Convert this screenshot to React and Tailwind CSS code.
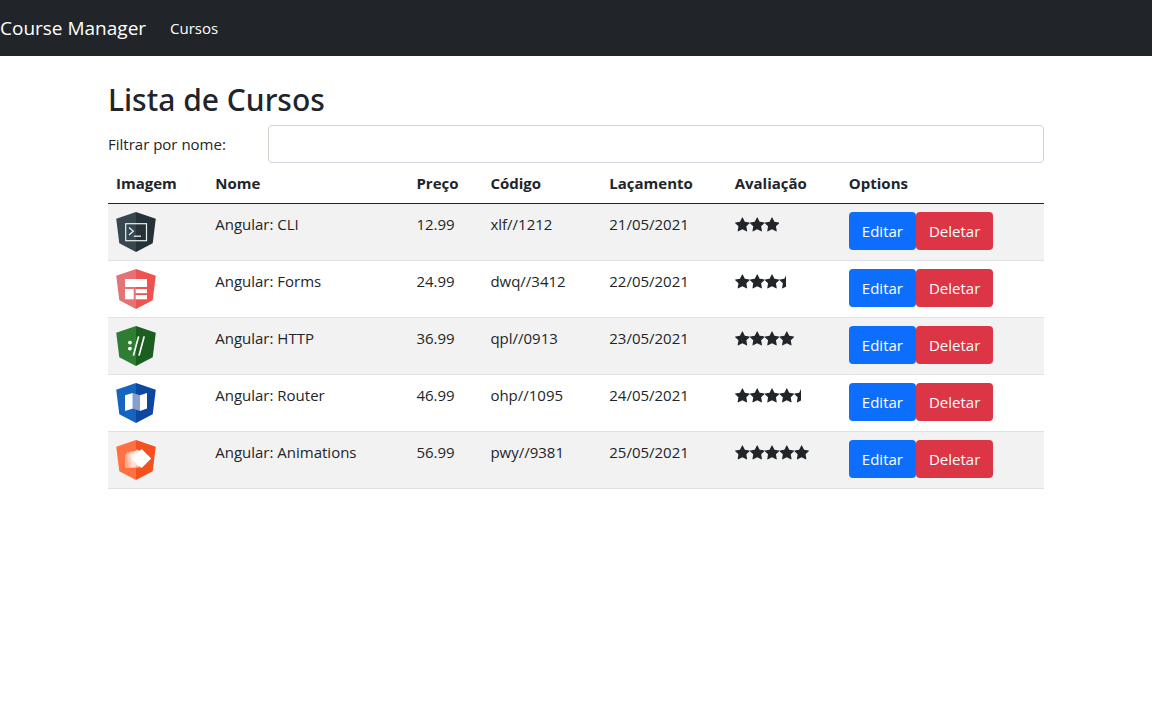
import { useState } from "react";

function Shield({ left, right, label, children }) {
  return (
    <svg viewBox="0 0 40 40" className="block size-10" role="img" aria-label={label}>
      <path d="M20 0 0.2 6.8 3.3 31.2 20 40Z" fill={left} />
      <path d="M20 0 39.8 6.8 36.7 31.2 20 40Z" fill={right} />
      {children}
    </svg>
  );
}

const logos = {
  cli: (
    <Shield left="#37474f" right="#263238" label="Angular CLI">
      <rect x="9.7" y="11.7" width="20.8" height="17" fill="none" stroke="#eceff1" strokeWidth="1.2" />
      <path d="M13 15.5 17.3 19.2 13 22.9" fill="none" stroke="#eceff1" strokeWidth="1.3" />
      <path d="M17.8 24.2H25" stroke="#eceff1" strokeWidth="1.3" />
    </Shield>
  ),
  forms: (
    <Shield left="#e57373" right="#ef5350" label="Angular Forms">
      <rect x="9" y="10" width="22" height="8" fill="#fff" />
      <rect x="9" y="20" width="8.7" height="10.3" fill="#fff" />
      <rect x="19.7" y="20" width="11.3" height="4.2" fill="#fff" />
      <rect x="19.7" y="26" width="11.3" height="4.3" fill="#fff" />
    </Shield>
  ),
  http: (
    <Shield left="#2e7d32" right="#1b5e20" label="Angular HTTP">
      <circle cx="13.9" cy="16.6" r="1.9" fill="#fff" />
      <circle cx="13.9" cy="22.6" r="1.9" fill="#fff" />
      <path d="M22.6 10.4 17.4 29.6M28.2 10.4 23 29.6" stroke="#fff" strokeWidth="1.7" />
    </Shield>
  ),
  router: (
    <Shield left="#1565c0" right="#0d47a1" label="Angular Router">
      <path d="M9 12.3 16.8 10V25.5L9 28Z" fill="#fff" />
      <path d="M16.8 10 24 12.3V28L16.8 25.5Z" fill="#869fcf" />
      <path d="M24 12.3 31 10V25.5L24 28Z" fill="#fff" />
    </Shield>
  ),
  animations: (
    <Shield left="#ff7043" right="#f4511e" label="Angular Animations">
      <rect x="9" y="14" width="14" height="14" fill="#fff" opacity="0.4" />
      <path d="M10.5 12.3 25.5 11.2 27 25.5 13 27.5Z" fill="#fff" opacity="0.35" />
      <path d="M13.5 11.4 26.5 9.8 29.5 24 15.5 27.8Z" fill="#fff" opacity="0.5" />
      <path d="M14.5 17.5 21 9.2 31 18 24 27.8Z" fill="#fff" opacity="0.7" />
      <path d="M25.7 9 35.2 18.5 25.7 28 16.2 18.5Z" fill="#fff" />
    </Shield>
  ),
};

const courses = [
  { logo: "cli", name: "Angular: CLI", price: "12.99", code: "xlf//1212", date: "21/05/2021", rating: 3 },
  { logo: "forms", name: "Angular: Forms", price: "24.99", code: "dwq//3412", date: "22/05/2021", rating: 3.5 },
  { logo: "http", name: "Angular: HTTP", price: "36.99", code: "qpl//0913", date: "23/05/2021", rating: 4 },
  { logo: "router", name: "Angular: Router", price: "46.99", code: "ohp//1095", date: "24/05/2021", rating: 4.5 },
  { logo: "animations", name: "Angular: Animations", price: "56.99", code: "pwy//9381", date: "25/05/2021", rating: 5 },
];

const starPath =
  "M1728 647q0 22-26 48l-363 354 86 500q1 7 1 20 0 21-10.5 35.5t-30.5 14.5q-19 0-40-12l-449-236-449 236q-22 12-40 12-21 0-31.5-14.5t-10.5-35.5q0-6 2-20l86-500-364-354q-25-27-25-48 0-37 56-46l502-73 225-455q19-41 49-41t49 41l225 455 502 73q56 9 56 46z";

function Stars({ rating }) {
  return (
    <div className="w-[74px] pt-[5px]" role="img" aria-label={`${rating} / 5`}>
      <div className="overflow-hidden" style={{ width: `${rating * 20}%` }}>
        <svg viewBox="0 0 8320 1792" className="block h-4 w-[74px] max-w-none" fill="currentColor">
          {[0, 1, 2, 3, 4].map((i) => (
            <path key={i} d={starPath} transform={`translate(${i * 1664 - 64} 0)`} />
          ))}
        </svg>
      </div>
    </div>
  );
}

export default function App() {
  const [filter, setFilter] = useState("");
  const shown = courses.filter((c) => c.name.toLowerCase().includes(filter.toLowerCase()));

  return (
    <div className="font-['Open_Sans','Noto_Sans',sans-serif] text-[15px] leading-6 text-[#212529]">
      <nav className="flex h-14 items-center gap-6 bg-[#212529] text-white">
        <a href="#" className="text-[19px] leading-[30px]">Course Manager</a>
        <a href="#cursos">Cursos</a>
      </nav>

      <main className="mx-auto max-w-[960px] px-3 pt-6">
        <h1 className="mb-1.5 font-['Noto_Sans','Open_Sans',sans-serif] text-[30px] leading-[39px] font-medium">Lista de Cursos</h1>

        <div className="flex items-center">
          <label htmlFor="filter" className="w-40 shrink-0">Filtrar por nome:</label>
          <input
            id="filter"
            type="text"
            value={filter}
            onChange={(e) => setFilter(e.target.value)}
            className="h-[38px] min-w-0 flex-1 rounded border border-[#ced4da] bg-white px-3 outline-none focus:border-[#86b7fe]"
          />
        </div>

        <table className="w-full table-fixed border-collapse text-left">
          <colgroup>
            <col className="w-[10.6%]" />
            <col className="w-[21.5%]" />
            <col className="w-[7.9%]" />
            <col className="w-[12.7%]" />
            <col className="w-[13.4%]" />
            <col className="w-[12.2%]" />
            <col />
          </colgroup>
          <thead>
            <tr className="border-b border-[#212529]">
              <th className="p-2">Imagem</th>
              <th className="p-2">Nome</th>
              <th className="p-2">Preço</th>
              <th className="p-2">Código</th>
              <th className="p-2">Laçamento</th>
              <th className="p-2">Avaliação</th>
              <th className="p-2">Options</th>
            </tr>
          </thead>
          <tbody>
            {shown.map((c) => (
              <tr key={c.name} className="border-b border-[#dee2e6] align-top odd:bg-[#f2f2f2]">
                <td className="p-2">{logos[c.logo]}</td>
                <td className="p-2">{c.name}</td>
                <td className="p-2">{c.price}</td>
                <td className="p-2">{c.code}</td>
                <td className="p-2">{c.date}</td>
                <td className="p-2"><Stars rating={c.rating} /></td>
                <td className="p-2">
                  <div className="flex text-white">
                    <button type="button" className="h-[38px] rounded bg-[#0d6efd] px-[13px]">Editar</button>
                    <button type="button" className="h-[38px] rounded bg-[#dc3545] px-[13px]">Deletar</button>
                  </div>
                </td>
              </tr>
            ))}
          </tbody>
        </table>
      </main>
    </div>
  );
}
